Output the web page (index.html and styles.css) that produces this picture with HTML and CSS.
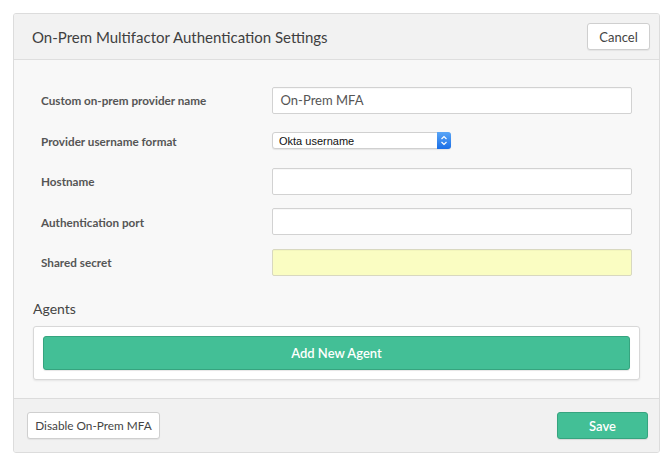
FILE: index.html
```html
<!DOCTYPE html>
<html>
<head>
<meta charset="utf-8">
<link rel="stylesheet" href="styles.css">
</head>
<body>
<div class="panel">
  <div class="header">
    <h1 class="title">On-Prem Multifactor Authentication Settings</h1>
    <button class="btn">Cancel</button>
  </div>
  <div class="body">
    <div class="form">
      <div class="row">
        <label class="label">Custom on-prem provider name</label>
        <div class="input">On-Prem MFA</div>
      </div>
      <div class="row">
        <label class="label">Provider username format</label>
        <div class="select"><span class="select-text">Okta username</span><span class="select-arrow"><svg width="8" height="11" viewBox="0 0 8 11"><path d="M1.5 4 L4 1.5 L6.5 4 M1.5 7 L4 9.5 L6.5 7" fill="none" stroke="#fff" stroke-width="1.2"/></svg></span></div>
      </div>
      <div class="row">
        <label class="label">Hostname</label>
        <div class="input"></div>
      </div>
      <div class="row">
        <label class="label">Authentication port</label>
        <div class="input"></div>
      </div>
      <div class="row">
        <label class="label">Shared secret</label>
        <div class="input yellow"></div>
      </div>
    </div>
    <h2 class="section">Agents</h2>
    <div class="agents">
      <button class="btn-green wide">Add New Agent</button>
    </div>
  </div>
  <div class="footer">
    <button class="btn">Disable On-Prem MFA</button>
    <button class="btn-green save">Save</button>
  </div>
</div>
</body>
</html>
```
FILE: styles.css
```css
* { box-sizing: border-box; }
html, body { margin: 0; padding: 0; background: #fff; }
body { font-family: Lato, "Open Sans", sans-serif; color: #555; }
.panel {
  margin: 13px 0 0 13px;
  width: 647px;
  border: 1px solid #dcdcdc;
  border-radius: 3px;
  background: #f8f8f8;
  overflow: hidden;
}
.header {
  height: 46px;
  background: #f2f2f2;
  border-bottom: 1px solid #dedede;
  display: flex;
  align-items: center;
  justify-content: space-between;
  padding: 0 9px 0 18px;
}
.title {
  margin: 0;
  font-size: 15px;
  font-weight: 400;
  color: #3f3f3f;
}
.btn {
  font-family: Lato, "Open Sans", sans-serif;
  font-size: 13px;
  color: #444;
  background: #fff;
  border: 1px solid #cfcfcf;
  border-radius: 3px;
  height: 27px;
  padding: 0 10px;
  box-shadow: 0 1px 1px rgba(0,0,0,0.06);
}
.header .btn { width: 63px; height: 27px; padding: 0; }
.body { padding: 27px 19px 18px 19px; }
.form {
  display: flex;
  flex-direction: column;
  gap: 14.5px;
  padding: 0 8px 0 8px;
}
.row { display: flex; align-items: center; height: 26px; }
.label {
  width: 231px;
  font-size: 11.7px;
  font-weight: 700;
  color: #555;
}
.input {
  width: 361px;
  height: 27px;
  background: #fff;
  border: 1px solid #d2d2d2;
  border-radius: 2px;
  font-size: 13px;
  color: #555;
  padding: 0 8px;
  display: flex;
  align-items: center;
  box-shadow: inset 0 1px 1px rgba(0,0,0,0.03);
}
.input.yellow { background: #fafdc2; border-color: #d8d8c0; }
.select {
  width: 179px;
  height: 17px;
  background: #fff;
  border: 1px solid #d0d0d0;
  border-radius: 3px;
  display: flex;
  align-items: center;
  justify-content: space-between;
  font-family: "Liberation Sans", Arial, sans-serif;
  font-size: 11px;
  color: #111;
  padding-left: 6px;
  box-shadow: 0 1px 1px rgba(0,0,0,0.08);
}
.select-arrow {
  width: 14px;
  height: 17px;
  margin-right: -1px;
  background: linear-gradient(#5aa6f7, #1a6ee6);
  border-radius: 0 3px 3px 0;
  display: flex;
  align-items: center;
  justify-content: center;
}
.section {
  margin: 25px 0 9px 0;
  font-size: 14px;
  font-weight: 400;
  color: #444;
}
.agents {
  background: #fff;
  border: 1px solid #d8d8d8;
  border-radius: 3px;
  padding: 9px 9px 9px 9px;
  box-shadow: 0 1px 2px rgba(0,0,0,0.08);
}
.btn-green {
  font-family: Lato, "Open Sans", sans-serif;
  background: #43bf96;
  border: 1px solid #36a47f;
  border-radius: 3px;
  color: #fff;
  font-size: 13px;
  font-weight: 600;
  box-shadow: 0 1px 1px rgba(0,0,0,0.1);
}
.wide { width: 100%; height: 34px; }
.footer {
  background: #f1f1f1;
  border-top: 1px solid #dcdcdc;
  height: 54px;
  display: flex;
  align-items: center;
  justify-content: space-between;
  padding: 0 11px 0 13px;
}
.footer .btn { width: 133px; padding: 0; font-size: 11.8px; }
.save { width: 91px; height: 27px; }
```
